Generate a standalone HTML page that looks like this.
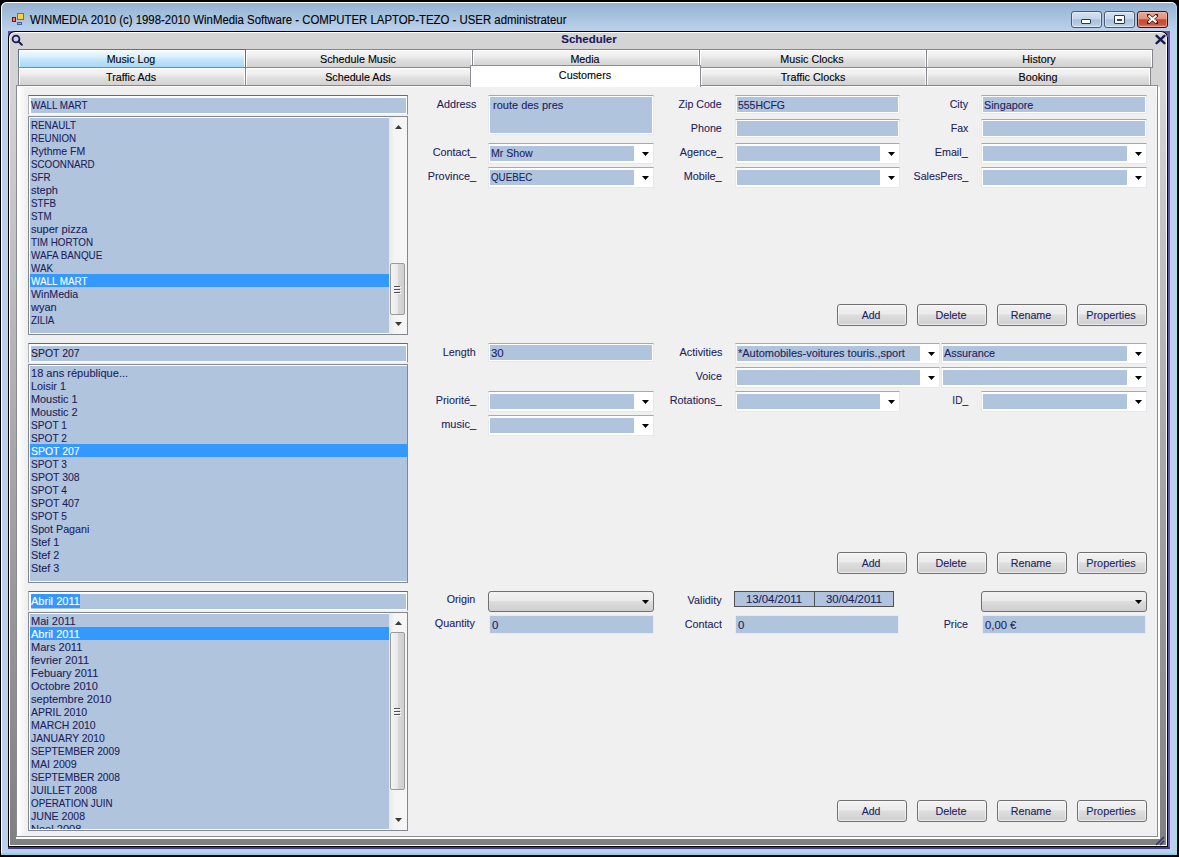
<!DOCTYPE html>
<html><head><meta charset="utf-8"><style>
html,body{margin:0;padding:0;width:1179px;height:857px;overflow:hidden;background:#000}
body>div,body>svg{position:absolute}
.t{position:absolute;font-family:"Liberation Sans",sans-serif;font-size:11px;line-height:13px;white-space:nowrap;-webkit-text-stroke:0.1px currentColor}
</style></head><body>
<div style="left:0;top:0;width:1179px;height:857px;background:#000"></div>
<div style="left:1px;top:2px;width:1176px;height:853px;background:#b9d1ea;border-radius:6px 6px 0 0"></div>
<div style="left:1px;top:2px;width:1176px;height:853px;border:1px solid #fff;border-right-color:#a8d8ec;border-bottom:none;box-sizing:border-box;border-radius:6px 6px 0 0"></div>
<div style="left:2px;top:3px;width:1174px;height:28px;background:linear-gradient(#94b2d0,#a3bfdc 40%,#b4cbe6 80%,#bdd1ec);border-radius:5px 5px 0 0"></div>
<div style="left:1px;top:853px;width:1176px;height:2px;background:#8fd0f0"></div>
<div style="left:12px;top:17px;width:4px;height:5px;background:#e88070;border:1px solid #701810;box-sizing:border-box"></div>
<div style="left:17px;top:13px;width:7px;height:7px;background:#f8d040;border:1px solid #907020;box-sizing:border-box"></div>
<div style="left:17px;top:22px;width:5px;height:3px;background:#90b4f4;border:1px solid #4060a8;box-sizing:border-box"></div>
<div class="t" style="left:30px;top:14px;color:#000;font-size:12px;font-weight:normal;letter-spacing:0px;transform:scaleX(0.949);transform-origin:0 0;">WINMEDIA 2010 (c) 1998-2010 WinMedia Software - COMPUTER LAPTOP-TEZO - USER administrateur</div>
<div style="left:1071px;top:11px;width:31px;height:17px;box-sizing:border-box;border:1px solid #4a5a70;border-radius:3px;background:linear-gradient(#d4e2f2,#c4d6ec 45%,#a8c0dc 52%,#b4cce6 85%,#c8dcf0);box-shadow:inset 0 0 0 1px rgba(255,255,255,.4)"></div>
<div style="left:1081px;top:19px;width:10px;height:5px;box-sizing:border-box;border:1px solid #283848;background:#fff;border-radius:1px"></div>
<div style="left:1104px;top:11px;width:31px;height:17px;box-sizing:border-box;border:1px solid #4a5a70;border-radius:3px;background:linear-gradient(#d4e2f2,#c4d6ec 45%,#a8c0dc 52%,#b4cce6 85%,#c8dcf0);box-shadow:inset 0 0 0 1px rgba(255,255,255,.4)"></div>
<div style="left:1114px;top:15px;width:11px;height:9px;box-sizing:border-box;border:1.5px solid #283848;background:#fff;border-radius:1px"></div>
<div style="left:1117px;top:19px;width:5px;height:2px;background:#384858"></div>
<div style="left:1137px;top:11px;width:31px;height:17px;box-sizing:border-box;border:1px solid #3a1410;border-radius:3px;background:linear-gradient(#eca898,#e0907c 45%,#c8482e 52%,#c85a40 85%,#e09080);box-shadow:inset 0 0 0 1px rgba(255,200,190,.5)"></div>
<svg style="position:absolute;left:1147px;top:14px" width="11" height="10" viewBox="0 0 11 10"><path d="M1.5 1.5 L9.5 8.5 M9.5 1.5 L1.5 8.5" stroke="#3a1510" stroke-width="3.6" stroke-linecap="round"/><path d="M1.5 1.5 L9.5 8.5 M9.5 1.5 L1.5 8.5" stroke="#fff" stroke-width="2.2"/></svg>
<div style="left:8px;top:31px;width:7px;height:7px;background:#5a50a0"></div>
<div style="left:1163px;top:31px;width:7px;height:4px;background:#5a50a0"></div>
<div style="left:1168px;top:33px;width:2px;height:816px;background:#5e56a8"></div>
<div style="left:1170px;top:33px;width:1px;height:816px;background:#c8d0f8"></div>
<div style="left:8px;top:847px;width:1162px;height:2px;background:#45408a"></div>
<div style="left:8px;top:31px;width:1160px;height:816px;background:#000;border-radius:7px 7px 0 0"></div>
<div style="left:9px;top:32px;width:1158px;height:814px;background:#fff;border-radius:6px 6px 0 0"></div>
<div style="left:10px;top:33px;width:1156px;height:812px;background:linear-gradient(#d4d4d4 0px,#d4d4d4 60px,#a8a8a8 420px,#808080 812px);border-radius:5px 5px 0 0"></div>
<div style="left:1158px;top:87px;width:2px;height:752px;background:#fff"></div>
<div style="left:16px;top:837px;width:1144px;height:2px;background:#fff"></div>
<svg style="position:absolute;left:11px;top:34px" width="12" height="12" viewBox="0 0 12 12"><circle cx="5" cy="5" r="3.4" fill="#d0d0f4" stroke="#1a1a50" stroke-width="1.8"/><path d="M7.4 7.4 L10.8 10.8" stroke="#1a1a50" stroke-width="2" stroke-linecap="round"/></svg>
<svg style="position:absolute;left:1155px;top:34px" width="11" height="11" viewBox="0 0 11 11"><path d="M1.6 1.8 L9.4 9.2 M9.4 1.8 L1.6 9.2" stroke="#1a1a50" stroke-width="2.4" stroke-linecap="round"/></svg>
<div class="t" style="left:439px;width:300px;top:33px;color:#1a1a60;font-size:11px;font-weight:bold;letter-spacing:0px;text-align:center;transform:scaleX(1.040);transform-origin:50% 0;">Scheduler</div>
<div style="left:16px;top:85px;width:1142px;height:752px;box-sizing:border-box;border:1px solid #898c95;background:#fff"></div>
<div style="left:17px;top:86px;width:1140px;height:750px;background:linear-gradient(#fcfcfc,#f0f0f0 30px)"></div>
<div style="left:18px;top:87px;width:1138px;height:748px;background:#f0f0f0"></div>
<div style="left:17px;top:86px;width:3px;height:750px;background:#fff"></div>
<div style="left:20px;top:87px;width:6px;height:748px;background:linear-gradient(90deg,#fafafa,#f0f0f0)"></div>
<div style="left:245px;top:49px;width:228px;height:19px;box-sizing:border-box;border:1px solid #84868c;background:linear-gradient(#f6f6f6,#efefef 35%,#dedede 60%,#d2d2d2);box-shadow:inset 1px 1px 0 #fff,inset -1px 0 0 #fff"></div>
<div class="t" style="left:208px;width:300px;top:53px;color:#000;font-size:11px;font-weight:normal;letter-spacing:0px;text-align:center;transform:scaleX(0.979);transform-origin:50% 0;">Schedule Music</div>
<div style="left:472px;top:49px;width:228px;height:19px;box-sizing:border-box;border:1px solid #84868c;background:linear-gradient(#f6f6f6,#efefef 35%,#dedede 60%,#d2d2d2);box-shadow:inset 1px 1px 0 #fff,inset -1px 0 0 #fff"></div>
<div class="t" style="left:435px;width:300px;top:53px;color:#000;font-size:11px;font-weight:normal;letter-spacing:0px;text-align:center;transform:scaleX(0.973);transform-origin:50% 0;">Media</div>
<div style="left:699px;top:49px;width:228px;height:19px;box-sizing:border-box;border:1px solid #84868c;background:linear-gradient(#f6f6f6,#efefef 35%,#dedede 60%,#d2d2d2);box-shadow:inset 1px 1px 0 #fff,inset -1px 0 0 #fff"></div>
<div class="t" style="left:662px;width:300px;top:53px;color:#000;font-size:11px;font-weight:normal;letter-spacing:0px;text-align:center;transform:scaleX(0.976);transform-origin:50% 0;">Music Clocks</div>
<div style="left:926px;top:49px;width:227px;height:19px;box-sizing:border-box;border:1px solid #84868c;background:linear-gradient(#f6f6f6,#efefef 35%,#dedede 60%,#d2d2d2);box-shadow:inset 1px 1px 0 #fff,inset -1px 0 0 #fff"></div>
<div class="t" style="left:889px;width:300px;top:53px;color:#000;font-size:11px;font-weight:normal;letter-spacing:0px;text-align:center;transform:scaleX(0.980);transform-origin:50% 0;">History</div>
<div style="left:18px;top:49px;width:228px;height:19px;box-sizing:border-box;border:1px solid #5a7088;background:linear-gradient(#f2fafe,#dff2fc 35%,#bfe4fa 60%,#a8d8f6);box-shadow:inset 1px 1px 0 #fff,inset -1px 0 0 #fff"></div>
<div class="t" style="left:-19px;width:300px;top:53px;color:#000;font-size:11px;font-weight:normal;letter-spacing:0px;text-align:center;transform:scaleX(0.968);transform-origin:50% 0;">Music Log</div>
<div style="left:18px;top:67px;width:228px;height:19px;box-sizing:border-box;border:1px solid #84868c;background:linear-gradient(#f6f6f6,#efefef 35%,#dedede 60%,#d2d2d2);box-shadow:inset 1px 1px 0 #fff,inset -1px 0 0 #fff"></div>
<div class="t" style="left:-19px;width:300px;top:71px;color:#000;font-size:11px;font-weight:normal;letter-spacing:0px;text-align:center;transform:scaleX(0.974);transform-origin:50% 0;">Traffic Ads</div>
<div style="left:245px;top:67px;width:227px;height:19px;box-sizing:border-box;border:1px solid #84868c;background:linear-gradient(#f6f6f6,#efefef 35%,#dedede 60%,#d2d2d2);box-shadow:inset 1px 1px 0 #fff,inset -1px 0 0 #fff"></div>
<div class="t" style="left:208px;width:300px;top:71px;color:#000;font-size:11px;font-weight:normal;letter-spacing:0px;text-align:center;transform:scaleX(0.976);transform-origin:50% 0;">Schedule Ads</div>
<div style="left:700px;top:67px;width:227px;height:19px;box-sizing:border-box;border:1px solid #84868c;background:linear-gradient(#f6f6f6,#efefef 35%,#dedede 60%,#d2d2d2);box-shadow:inset 1px 1px 0 #fff,inset -1px 0 0 #fff"></div>
<div class="t" style="left:663px;width:300px;top:71px;color:#000;font-size:11px;font-weight:normal;letter-spacing:0px;text-align:center;transform:scaleX(0.979);transform-origin:50% 0;">Traffic Clocks</div>
<div style="left:926px;top:67px;width:225px;height:19px;box-sizing:border-box;border:1px solid #84868c;background:linear-gradient(#f6f6f6,#efefef 35%,#dedede 60%,#d2d2d2);box-shadow:inset 1px 1px 0 #fff,inset -1px 0 0 #fff"></div>
<div class="t" style="left:888px;width:300px;top:71px;color:#000;font-size:11px;font-weight:normal;letter-spacing:0px;text-align:center;transform:scaleX(0.980);transform-origin:50% 0;">Booking</div>
<div style="left:470px;top:65px;width:231px;height:22px;box-sizing:border-box;border:1px solid #898c95;border-bottom:none;background:#fff"></div>
<div class="t" style="left:435px;width:300px;top:69px;color:#000;font-size:11px;font-weight:normal;letter-spacing:0px;text-align:center;transform:scaleX(0.984);transform-origin:50% 0;">Customers</div>
<div style="left:28px;top:95px;width:380px;height:20px;box-sizing:border-box;border:1px solid #a8b0b8;border-top-color:#5c6c84;border-right-color:#8a9098;border-bottom-color:#f0f4f8;background:#fff"></div>
<div style="left:31px;top:98px;width:375px;height:15px;background:#b0c4de"></div>
<div style="left:28px;top:116px;width:380px;height:219px;box-sizing:border-box;border:1px solid #828790;background:#fff"></div>
<div style="left:30px;top:118px;width:360px;height:215px;background:#b0c4de"></div>
<div class="t" style="left:31px;top:118px;width:359px;height:13px;overflow:hidden;color:#1e1e5c"><span style="display:inline-block;margin-top:1px;transform:scaleX(0.890);transform-origin:0 0">RENAULT</span></div>
<div class="t" style="left:31px;top:131px;width:359px;height:13px;overflow:hidden;color:#1e1e5c"><span style="display:inline-block;margin-top:1px;transform:scaleX(0.890);transform-origin:0 0">REUNION</span></div>
<div class="t" style="left:31px;top:144px;width:359px;height:13px;overflow:hidden;color:#1e1e5c"><span style="display:inline-block;margin-top:1px;transform:scaleX(0.954);transform-origin:0 0">Rythme FM</span></div>
<div class="t" style="left:31px;top:157px;width:359px;height:13px;overflow:hidden;color:#1e1e5c"><span style="display:inline-block;margin-top:1px;transform:scaleX(0.890);transform-origin:0 0">SCOONNARD</span></div>
<div class="t" style="left:31px;top:170px;width:359px;height:13px;overflow:hidden;color:#1e1e5c"><span style="display:inline-block;margin-top:1px;transform:scaleX(0.890);transform-origin:0 0">SFR</span></div>
<div class="t" style="left:31px;top:183px;width:359px;height:13px;overflow:hidden;color:#1e1e5c"><span style="display:inline-block;margin-top:1px;transform:scaleX(1.000);transform-origin:0 0">steph</span></div>
<div class="t" style="left:31px;top:196px;width:359px;height:13px;overflow:hidden;color:#1e1e5c"><span style="display:inline-block;margin-top:1px;transform:scaleX(0.890);transform-origin:0 0">STFB</span></div>
<div class="t" style="left:31px;top:209px;width:359px;height:13px;overflow:hidden;color:#1e1e5c"><span style="display:inline-block;margin-top:1px;transform:scaleX(0.890);transform-origin:0 0">STM</span></div>
<div class="t" style="left:31px;top:222px;width:359px;height:13px;overflow:hidden;color:#1e1e5c"><span style="display:inline-block;margin-top:1px;transform:scaleX(1.000);transform-origin:0 0">super pizza</span></div>
<div class="t" style="left:31px;top:235px;width:359px;height:13px;overflow:hidden;color:#1e1e5c"><span style="display:inline-block;margin-top:1px;transform:scaleX(0.895);transform-origin:0 0">TIM HORTON</span></div>
<div class="t" style="left:31px;top:248px;width:359px;height:13px;overflow:hidden;color:#1e1e5c"><span style="display:inline-block;margin-top:1px;transform:scaleX(0.894);transform-origin:0 0">WAFA BANQUE</span></div>
<div class="t" style="left:31px;top:261px;width:359px;height:13px;overflow:hidden;color:#1e1e5c"><span style="display:inline-block;margin-top:1px;transform:scaleX(0.890);transform-origin:0 0">WAK</span></div>
<div style="left:30px;top:274px;width:360px;height:13px;background:#3399ff"></div>
<div class="t" style="left:31px;top:274px;width:359px;height:13px;overflow:hidden;color:#fff"><span style="display:inline-block;margin-top:1px;transform:scaleX(0.895);transform-origin:0 0">WALL MART</span></div>
<div class="t" style="left:31px;top:287px;width:359px;height:13px;overflow:hidden;color:#1e1e5c"><span style="display:inline-block;margin-top:1px;transform:scaleX(0.966);transform-origin:0 0">WinMedia</span></div>
<div class="t" style="left:31px;top:300px;width:359px;height:13px;overflow:hidden;color:#1e1e5c"><span style="display:inline-block;margin-top:1px;transform:scaleX(1.000);transform-origin:0 0">wyan</span></div>
<div class="t" style="left:31px;top:313px;width:359px;height:13px;overflow:hidden;color:#1e1e5c"><span style="display:inline-block;margin-top:1px;transform:scaleX(0.890);transform-origin:0 0">ZILIA</span></div>
<div style="left:389px;top:117px;width:18px;height:217px;background:linear-gradient(90deg,#e8e8e8,#f4f4f4 30%,#f6f6f6)"></div>
<svg style="position:absolute;left:395px;top:125px" width="7" height="4"><path d="M0 4 L3.5 0 L7 4 Z" fill="#3a3a3a"/></svg>
<svg style="position:absolute;left:395px;top:322px" width="7" height="4"><path d="M0 0 L7 0 L3.5 4 Z" fill="#3a3a3a"/></svg>
<div style="left:390px;top:263px;width:15px;height:52px;box-sizing:border-box;border:1px solid #9a9a9a;border-radius:2px;background:linear-gradient(90deg,#f4f4f4,#e8e8e8 50%,#d8d8d8 51%,#d0d0d0)"></div>
<div style="left:394px;top:286px;width:6px;height:1px;background:#505050"></div>
<div style="left:395px;top:287px;width:6px;height:1px;background:#fafafa"></div>
<div style="left:394px;top:289px;width:6px;height:1px;background:#505050"></div>
<div style="left:395px;top:290px;width:6px;height:1px;background:#fafafa"></div>
<div style="left:394px;top:292px;width:6px;height:1px;background:#505050"></div>
<div style="left:395px;top:293px;width:6px;height:1px;background:#fafafa"></div>
<div class="t" style="left:31px;top:99px;color:#1e1e5c;font-size:11px;font-weight:normal;letter-spacing:0px;transform:scaleX(0.895);transform-origin:0 0;">WALL MART</div>
<div style="left:28px;top:343px;width:380px;height:20px;box-sizing:border-box;border:1px solid #a8b0b8;border-top-color:#5c6c84;border-right-color:#8a9098;border-bottom-color:#f0f4f8;background:#fff"></div>
<div style="left:31px;top:346px;width:375px;height:15px;background:#b0c4de"></div>
<div style="left:28px;top:364px;width:380px;height:219px;box-sizing:border-box;border:1px solid #828790;background:#fff"></div>
<div style="left:30px;top:366px;width:377px;height:215px;background:#b0c4de"></div>
<div class="t" style="left:31px;top:366px;width:376px;height:13px;overflow:hidden;color:#1e1e5c"><span style="display:inline-block;margin-top:1px;transform:scaleX(1.005);transform-origin:0 0">18 ans république...</span></div>
<div class="t" style="left:31px;top:379px;width:376px;height:13px;overflow:hidden;color:#1e1e5c"><span style="display:inline-block;margin-top:1px;transform:scaleX(0.987);transform-origin:0 0">Loisir 1</span></div>
<div class="t" style="left:31px;top:392px;width:376px;height:13px;overflow:hidden;color:#1e1e5c"><span style="display:inline-block;margin-top:1px;transform:scaleX(0.989);transform-origin:0 0">Moustic 1</span></div>
<div class="t" style="left:31px;top:405px;width:376px;height:13px;overflow:hidden;color:#1e1e5c"><span style="display:inline-block;margin-top:1px;transform:scaleX(0.989);transform-origin:0 0">Moustic 2</span></div>
<div class="t" style="left:31px;top:418px;width:376px;height:13px;overflow:hidden;color:#1e1e5c"><span style="display:inline-block;margin-top:1px;transform:scaleX(0.923);transform-origin:0 0">SPOT 1</span></div>
<div class="t" style="left:31px;top:431px;width:376px;height:13px;overflow:hidden;color:#1e1e5c"><span style="display:inline-block;margin-top:1px;transform:scaleX(0.923);transform-origin:0 0">SPOT 2</span></div>
<div style="left:30px;top:444px;width:377px;height:13px;background:#3399ff"></div>
<div class="t" style="left:31px;top:444px;width:376px;height:13px;overflow:hidden;color:#fff"><span style="display:inline-block;margin-top:1px;transform:scaleX(0.951);transform-origin:0 0">SPOT 207</span></div>
<div class="t" style="left:31px;top:457px;width:376px;height:13px;overflow:hidden;color:#1e1e5c"><span style="display:inline-block;margin-top:1px;transform:scaleX(0.923);transform-origin:0 0">SPOT 3</span></div>
<div class="t" style="left:31px;top:470px;width:376px;height:13px;overflow:hidden;color:#1e1e5c"><span style="display:inline-block;margin-top:1px;transform:scaleX(0.951);transform-origin:0 0">SPOT 308</span></div>
<div class="t" style="left:31px;top:483px;width:376px;height:13px;overflow:hidden;color:#1e1e5c"><span style="display:inline-block;margin-top:1px;transform:scaleX(0.923);transform-origin:0 0">SPOT 4</span></div>
<div class="t" style="left:31px;top:496px;width:376px;height:13px;overflow:hidden;color:#1e1e5c"><span style="display:inline-block;margin-top:1px;transform:scaleX(0.951);transform-origin:0 0">SPOT 407</span></div>
<div class="t" style="left:31px;top:509px;width:376px;height:13px;overflow:hidden;color:#1e1e5c"><span style="display:inline-block;margin-top:1px;transform:scaleX(0.923);transform-origin:0 0">SPOT 5</span></div>
<div class="t" style="left:31px;top:522px;width:376px;height:13px;overflow:hidden;color:#1e1e5c"><span style="display:inline-block;margin-top:1px;transform:scaleX(0.974);transform-origin:0 0">Spot Pagani</span></div>
<div class="t" style="left:31px;top:535px;width:376px;height:13px;overflow:hidden;color:#1e1e5c"><span style="display:inline-block;margin-top:1px;transform:scaleX(0.983);transform-origin:0 0">Stef 1</span></div>
<div class="t" style="left:31px;top:548px;width:376px;height:13px;overflow:hidden;color:#1e1e5c"><span style="display:inline-block;margin-top:1px;transform:scaleX(0.983);transform-origin:0 0">Stef 2</span></div>
<div class="t" style="left:31px;top:561px;width:376px;height:13px;overflow:hidden;color:#1e1e5c"><span style="display:inline-block;margin-top:1px;transform:scaleX(0.983);transform-origin:0 0">Stef 3</span></div>
<div class="t" style="left:31px;top:347px;color:#202048;font-size:11px;font-weight:normal;letter-spacing:0px;transform:scaleX(0.951);transform-origin:0 0;">SPOT 207</div>
<div style="left:28px;top:591px;width:380px;height:20px;box-sizing:border-box;border:1px solid #a8b0b8;border-top-color:#5c6c84;border-right-color:#8a9098;border-bottom-color:#f0f4f8;background:#fff"></div>
<div style="left:31px;top:594px;width:375px;height:15px;background:#b0c4de"></div>
<div style="left:28px;top:612px;width:380px;height:219px;box-sizing:border-box;border:1px solid #828790;background:#fff"></div>
<div style="left:30px;top:614px;width:360px;height:215px;background:#b0c4de"></div>
<div class="t" style="left:31px;top:614px;width:359px;height:13px;overflow:hidden;color:#1e1e5c"><span style="display:inline-block;margin-top:1px;transform:scaleX(1.004);transform-origin:0 0">Mai 2011</span></div>
<div style="left:30px;top:627px;width:360px;height:13px;background:#3399ff"></div>
<div class="t" style="left:31px;top:627px;width:359px;height:13px;overflow:hidden;color:#fff"><span style="display:inline-block;margin-top:1px;transform:scaleX(1.003);transform-origin:0 0">Abril 2011</span></div>
<div class="t" style="left:31px;top:640px;width:359px;height:13px;overflow:hidden;color:#1e1e5c"><span style="display:inline-block;margin-top:1px;transform:scaleX(1.003);transform-origin:0 0">Mars 2011</span></div>
<div class="t" style="left:31px;top:653px;width:359px;height:13px;overflow:hidden;color:#1e1e5c"><span style="display:inline-block;margin-top:1px;transform:scaleX(1.015);transform-origin:0 0">fevrier 2011</span></div>
<div class="t" style="left:31px;top:666px;width:359px;height:13px;overflow:hidden;color:#1e1e5c"><span style="display:inline-block;margin-top:1px;transform:scaleX(1.003);transform-origin:0 0">Febuary 2011</span></div>
<div class="t" style="left:31px;top:679px;width:359px;height:13px;overflow:hidden;color:#1e1e5c"><span style="display:inline-block;margin-top:1px;transform:scaleX(1.003);transform-origin:0 0">Octobre 2010</span></div>
<div class="t" style="left:31px;top:692px;width:359px;height:13px;overflow:hidden;color:#1e1e5c"><span style="display:inline-block;margin-top:1px;transform:scaleX(1.013);transform-origin:0 0">septembre 2010</span></div>
<div class="t" style="left:31px;top:705px;width:359px;height:13px;overflow:hidden;color:#1e1e5c"><span style="display:inline-block;margin-top:1px;transform:scaleX(0.952);transform-origin:0 0">APRIL 2010</span></div>
<div class="t" style="left:31px;top:718px;width:359px;height:13px;overflow:hidden;color:#1e1e5c"><span style="display:inline-block;margin-top:1px;transform:scaleX(0.952);transform-origin:0 0">MARCH 2010</span></div>
<div class="t" style="left:31px;top:731px;width:359px;height:13px;overflow:hidden;color:#1e1e5c"><span style="display:inline-block;margin-top:1px;transform:scaleX(0.941);transform-origin:0 0">JANUARY 2010</span></div>
<div class="t" style="left:31px;top:744px;width:359px;height:13px;overflow:hidden;color:#1e1e5c"><span style="display:inline-block;margin-top:1px;transform:scaleX(0.933);transform-origin:0 0">SEPTEMBER 2009</span></div>
<div class="t" style="left:31px;top:757px;width:359px;height:13px;overflow:hidden;color:#1e1e5c"><span style="display:inline-block;margin-top:1px;transform:scaleX(0.971);transform-origin:0 0">MAI 2009</span></div>
<div class="t" style="left:31px;top:770px;width:359px;height:13px;overflow:hidden;color:#1e1e5c"><span style="display:inline-block;margin-top:1px;transform:scaleX(0.933);transform-origin:0 0">SEPTEMBER 2008</span></div>
<div class="t" style="left:31px;top:783px;width:359px;height:13px;overflow:hidden;color:#1e1e5c"><span style="display:inline-block;margin-top:1px;transform:scaleX(0.941);transform-origin:0 0">JUILLET 2008</span></div>
<div class="t" style="left:31px;top:796px;width:359px;height:13px;overflow:hidden;color:#1e1e5c"><span style="display:inline-block;margin-top:1px;transform:scaleX(0.893);transform-origin:0 0">OPERATION JUIN</span></div>
<div class="t" style="left:31px;top:809px;width:359px;height:13px;overflow:hidden;color:#1e1e5c"><span style="display:inline-block;margin-top:1px;transform:scaleX(0.960);transform-origin:0 0">JUNE 2008</span></div>
<div class="t" style="left:31px;top:822px;width:359px;height:7px;overflow:hidden;color:#1e1e5c"><span style="display:inline-block;margin-top:1px;transform:scaleX(1.003);transform-origin:0 0">Noel 2008</span></div>
<div style="left:389px;top:613px;width:18px;height:217px;background:linear-gradient(90deg,#e8e8e8,#f4f4f4 30%,#f6f6f6)"></div>
<svg style="position:absolute;left:395px;top:621px" width="7" height="4"><path d="M0 4 L3.5 0 L7 4 Z" fill="#3a3a3a"/></svg>
<svg style="position:absolute;left:395px;top:818px" width="7" height="4"><path d="M0 0 L7 0 L3.5 4 Z" fill="#3a3a3a"/></svg>
<div style="left:390px;top:632px;width:15px;height:158px;box-sizing:border-box;border:1px solid #9a9a9a;border-radius:2px;background:linear-gradient(90deg,#f4f4f4,#e8e8e8 50%,#d8d8d8 51%,#d0d0d0)"></div>
<div style="left:394px;top:708px;width:6px;height:1px;background:#505050"></div>
<div style="left:395px;top:709px;width:6px;height:1px;background:#fafafa"></div>
<div style="left:394px;top:711px;width:6px;height:1px;background:#505050"></div>
<div style="left:395px;top:712px;width:6px;height:1px;background:#fafafa"></div>
<div style="left:394px;top:714px;width:6px;height:1px;background:#505050"></div>
<div style="left:395px;top:715px;width:6px;height:1px;background:#fafafa"></div>
<div style="left:31px;top:594px;width:49px;height:14px;background:#3399ff"></div>
<div class="t" style="left:31px;top:595px;color:#fff;font-size:11px;font-weight:normal;letter-spacing:0px;transform:scaleX(1.003);transform-origin:0 0;">Abril 2011</div>
<div class="t" style="right:703px;top:98px;color:#1e1e5c;font-size:11px;font-weight:normal;letter-spacing:0px;text-align:right;transform:scaleX(0.980);transform-origin:100% 0;">Address</div>
<div style="left:488px;top:95px;width:166px;height:40px;box-sizing:border-box;border:1px solid #e3e9ef;border-top-color:#a8a8a8;background:#fff"></div>
<div style="left:490px;top:97px;width:162px;height:36px;background:#b0c4de"></div>
<div class="t" style="left:493px;top:99px;color:#1e1e5c;font-size:11px;font-weight:normal;letter-spacing:0px;transform:scaleX(1.000);transform-origin:0 0;">route des pres</div>
<div class="t" style="right:703px;top:146px;color:#1e1e5c;font-size:11px;font-weight:normal;letter-spacing:0px;text-align:right;transform:scaleX(0.982);transform-origin:100% 0;">Contact_</div>
<div style="left:488px;top:143px;width:166px;height:21px;box-sizing:border-box;border:1px solid #e3e9ef;border-top-color:#a8a8a8;background:#fff"></div>
<div style="left:490px;top:146px;width:144px;height:15px;background:#b0c4de"></div>
<svg style="position:absolute;left:642px;top:152px" width="7" height="5"><path d="M0 0 L7 0 L3.5 4 Z" fill="#000"/></svg>
<div class="t" style="left:491px;top:147px;color:#1e1e5c;font-size:11px;font-weight:normal;letter-spacing:0px;transform:scaleX(0.959);transform-origin:0 0;">Mr Show</div>
<div class="t" style="right:703px;top:170px;color:#1e1e5c;font-size:11px;font-weight:normal;letter-spacing:0px;text-align:right;transform:scaleX(0.984);transform-origin:100% 0;">Province_</div>
<div style="left:488px;top:167px;width:166px;height:21px;box-sizing:border-box;border:1px solid #e3e9ef;border-top-color:#a8a8a8;background:#fff"></div>
<div style="left:490px;top:170px;width:144px;height:15px;background:#b0c4de"></div>
<svg style="position:absolute;left:642px;top:176px" width="7" height="5"><path d="M0 0 L7 0 L3.5 4 Z" fill="#000"/></svg>
<div class="t" style="left:491px;top:171px;color:#1e1e5c;font-size:11px;font-weight:normal;letter-spacing:0px;transform:scaleX(0.890);transform-origin:0 0;">QUEBEC</div>
<div class="t" style="right:457px;top:98px;color:#1e1e5c;font-size:11px;font-weight:normal;letter-spacing:0px;text-align:right;transform:scaleX(0.964);transform-origin:100% 0;">Zip Code</div>
<div style="left:735px;top:95px;width:165px;height:19px;box-sizing:border-box;border:1px solid #e3e9ef;border-top-color:#a8a8a8;background:#fff"></div>
<div style="left:737px;top:97px;width:161px;height:15px;background:#b0c4de"></div>
<div class="t" style="left:738px;top:99px;color:#1e1e5c;font-size:11px;font-weight:normal;letter-spacing:0px;transform:scaleX(0.948);transform-origin:0 0;">555HCFG</div>
<div class="t" style="right:457px;top:122px;color:#1e1e5c;font-size:11px;font-weight:normal;letter-spacing:0px;text-align:right;transform:scaleX(0.973);transform-origin:100% 0;">Phone</div>
<div style="left:735px;top:119px;width:165px;height:19px;box-sizing:border-box;border:1px solid #e3e9ef;border-top-color:#a8a8a8;background:#fff"></div>
<div style="left:737px;top:121px;width:161px;height:15px;background:#b0c4de"></div>
<div class="t" style="right:457px;top:146px;color:#1e1e5c;font-size:11px;font-weight:normal;letter-spacing:0px;text-align:right;transform:scaleX(0.980);transform-origin:100% 0;">Agence_</div>
<div style="left:735px;top:143px;width:165px;height:21px;box-sizing:border-box;border:1px solid #e3e9ef;border-top-color:#a8a8a8;background:#fff"></div>
<div style="left:737px;top:146px;width:143px;height:15px;background:#b0c4de"></div>
<svg style="position:absolute;left:888px;top:152px" width="7" height="5"><path d="M0 0 L7 0 L3.5 4 Z" fill="#000"/></svg>
<div class="t" style="right:457px;top:170px;color:#1e1e5c;font-size:11px;font-weight:normal;letter-spacing:0px;text-align:right;transform:scaleX(0.980);transform-origin:100% 0;">Mobile_</div>
<div style="left:735px;top:167px;width:165px;height:21px;box-sizing:border-box;border:1px solid #e3e9ef;border-top-color:#a8a8a8;background:#fff"></div>
<div style="left:737px;top:170px;width:143px;height:15px;background:#b0c4de"></div>
<svg style="position:absolute;left:888px;top:176px" width="7" height="5"><path d="M0 0 L7 0 L3.5 4 Z" fill="#000"/></svg>
<div class="t" style="right:211px;top:98px;color:#1e1e5c;font-size:11px;font-weight:normal;letter-spacing:0px;text-align:right;transform:scaleX(0.966);transform-origin:100% 0;">City</div>
<div style="left:981px;top:95px;width:166px;height:19px;box-sizing:border-box;border:1px solid #e3e9ef;border-top-color:#a8a8a8;background:#fff"></div>
<div style="left:983px;top:97px;width:162px;height:15px;background:#b0c4de"></div>
<div class="t" style="left:984px;top:99px;color:#1e1e5c;font-size:11px;font-weight:normal;letter-spacing:0px;transform:scaleX(0.984);transform-origin:0 0;">Singapore</div>
<div class="t" style="right:211px;top:122px;color:#1e1e5c;font-size:11px;font-weight:normal;letter-spacing:0px;text-align:right;transform:scaleX(0.956);transform-origin:100% 0;">Fax</div>
<div style="left:981px;top:119px;width:166px;height:19px;box-sizing:border-box;border:1px solid #e3e9ef;border-top-color:#a8a8a8;background:#fff"></div>
<div style="left:983px;top:121px;width:162px;height:15px;background:#b0c4de"></div>
<div class="t" style="right:211px;top:146px;color:#1e1e5c;font-size:11px;font-weight:normal;letter-spacing:0px;text-align:right;transform:scaleX(0.977);transform-origin:100% 0;">Email_</div>
<div style="left:981px;top:143px;width:166px;height:21px;box-sizing:border-box;border:1px solid #e3e9ef;border-top-color:#a8a8a8;background:#fff"></div>
<div style="left:983px;top:146px;width:144px;height:15px;background:#b0c4de"></div>
<svg style="position:absolute;left:1135px;top:152px" width="7" height="5"><path d="M0 0 L7 0 L3.5 4 Z" fill="#000"/></svg>
<div class="t" style="right:211px;top:170px;color:#1e1e5c;font-size:11px;font-weight:normal;letter-spacing:0px;text-align:right;transform:scaleX(0.973);transform-origin:100% 0;">SalesPers_</div>
<div style="left:981px;top:167px;width:166px;height:21px;box-sizing:border-box;border:1px solid #e3e9ef;border-top-color:#a8a8a8;background:#fff"></div>
<div style="left:983px;top:170px;width:144px;height:15px;background:#b0c4de"></div>
<svg style="position:absolute;left:1135px;top:176px" width="7" height="5"><path d="M0 0 L7 0 L3.5 4 Z" fill="#000"/></svg>
<div style="left:837px;top:304px;width:70px;height:22px;box-sizing:border-box;border:1px solid #707070;border-radius:3px;background:linear-gradient(#f2f2f2,#ebebeb 45%,#dddddd 50%,#cfcfcf);box-shadow:inset 0 0 0 1px rgba(255,255,255,.6)"></div>
<div class="t" style="left:721px;width:300px;top:309px;color:#1e1e5c;font-size:11px;font-weight:normal;letter-spacing:0px;text-align:center;transform:scaleX(0.956);transform-origin:50% 0;">Add</div>
<div style="left:917px;top:304px;width:70px;height:22px;box-sizing:border-box;border:1px solid #707070;border-radius:3px;background:linear-gradient(#f2f2f2,#ebebeb 45%,#dddddd 50%,#cfcfcf);box-shadow:inset 0 0 0 1px rgba(255,255,255,.6)"></div>
<div class="t" style="left:801px;width:300px;top:309px;color:#1e1e5c;font-size:11px;font-weight:normal;letter-spacing:0px;text-align:center;transform:scaleX(0.977);transform-origin:50% 0;">Delete</div>
<div style="left:997px;top:304px;width:70px;height:22px;box-sizing:border-box;border:1px solid #707070;border-radius:3px;background:linear-gradient(#f2f2f2,#ebebeb 45%,#dddddd 50%,#cfcfcf);box-shadow:inset 0 0 0 1px rgba(255,255,255,.6)"></div>
<div class="t" style="left:881px;width:300px;top:309px;color:#1e1e5c;font-size:11px;font-weight:normal;letter-spacing:0px;text-align:center;transform:scaleX(0.977);transform-origin:50% 0;">Rename</div>
<div style="left:1077px;top:304px;width:70px;height:22px;box-sizing:border-box;border:1px solid #707070;border-radius:3px;background:linear-gradient(#f2f2f2,#ebebeb 45%,#dddddd 50%,#cfcfcf);box-shadow:inset 0 0 0 1px rgba(255,255,255,.6)"></div>
<div class="t" style="left:961px;width:300px;top:309px;color:#1e1e5c;font-size:11px;font-weight:normal;letter-spacing:0px;text-align:center;transform:scaleX(0.986);transform-origin:50% 0;">Properties</div>
<div class="t" style="right:703px;top:346px;color:#1e1e5c;font-size:11px;font-weight:normal;letter-spacing:0px;text-align:right;transform:scaleX(0.977);transform-origin:100% 0;">Length</div>
<div style="left:488px;top:343px;width:166px;height:19px;box-sizing:border-box;border:1px solid #e3e9ef;border-top-color:#a8a8a8;background:#fff"></div>
<div style="left:490px;top:345px;width:162px;height:15px;background:#b0c4de"></div>
<div class="t" style="left:491px;top:347px;color:#1e1e5c;font-size:11px;font-weight:normal;letter-spacing:0px;transform:scaleX(1.040);transform-origin:0 0;">30</div>
<div class="t" style="right:703px;top:394px;color:#1e1e5c;font-size:11px;font-weight:normal;letter-spacing:0px;text-align:right;transform:scaleX(0.984);transform-origin:100% 0;">Priorité_</div>
<div style="left:488px;top:391px;width:166px;height:21px;box-sizing:border-box;border:1px solid #e3e9ef;border-top-color:#a8a8a8;background:#fff"></div>
<div style="left:490px;top:394px;width:144px;height:15px;background:#b0c4de"></div>
<svg style="position:absolute;left:642px;top:400px" width="7" height="5"><path d="M0 0 L7 0 L3.5 4 Z" fill="#000"/></svg>
<div class="t" style="right:703px;top:418px;color:#1e1e5c;font-size:11px;font-weight:normal;letter-spacing:0px;text-align:right;transform:scaleX(1.000);transform-origin:100% 0;">music_</div>
<div style="left:488px;top:415px;width:166px;height:21px;box-sizing:border-box;border:1px solid #e3e9ef;border-top-color:#a8a8a8;background:#fff"></div>
<div style="left:490px;top:418px;width:144px;height:15px;background:#b0c4de"></div>
<svg style="position:absolute;left:642px;top:424px" width="7" height="5"><path d="M0 0 L7 0 L3.5 4 Z" fill="#000"/></svg>
<div class="t" style="right:457px;top:346px;color:#1e1e5c;font-size:11px;font-weight:normal;letter-spacing:0px;text-align:right;transform:scaleX(0.986);transform-origin:100% 0;">Activities</div>
<div style="left:735px;top:343px;width:205px;height:21px;box-sizing:border-box;border:1px solid #e3e9ef;border-top-color:#a8a8a8;background:#fff"></div>
<div style="left:737px;top:346px;width:183px;height:15px;background:#b0c4de"></div>
<svg style="position:absolute;left:928px;top:352px" width="7" height="5"><path d="M0 0 L7 0 L3.5 4 Z" fill="#000"/></svg>
<div class="t" style="left:738px;top:347px;color:#1e1e5c;font-size:11px;font-weight:normal;letter-spacing:0px;transform:scaleX(0.996);transform-origin:0 0;">*Automobiles-voitures touris.,sport</div>
<div style="left:941px;top:343px;width:206px;height:21px;box-sizing:border-box;border:1px solid #e3e9ef;border-top-color:#a8a8a8;background:#fff"></div>
<div style="left:943px;top:346px;width:184px;height:15px;background:#b0c4de"></div>
<svg style="position:absolute;left:1135px;top:352px" width="7" height="5"><path d="M0 0 L7 0 L3.5 4 Z" fill="#000"/></svg>
<div class="t" style="left:944px;top:347px;color:#1e1e5c;font-size:11px;font-weight:normal;letter-spacing:0px;transform:scaleX(0.984);transform-origin:0 0;">Assurance</div>
<div class="t" style="right:457px;top:370px;color:#1e1e5c;font-size:11px;font-weight:normal;letter-spacing:0px;text-align:right;transform:scaleX(0.973);transform-origin:100% 0;">Voice</div>
<div style="left:735px;top:367px;width:205px;height:21px;box-sizing:border-box;border:1px solid #e3e9ef;border-top-color:#a8a8a8;background:#fff"></div>
<div style="left:737px;top:370px;width:183px;height:15px;background:#b0c4de"></div>
<svg style="position:absolute;left:928px;top:376px" width="7" height="5"><path d="M0 0 L7 0 L3.5 4 Z" fill="#000"/></svg>
<div style="left:941px;top:367px;width:206px;height:21px;box-sizing:border-box;border:1px solid #e3e9ef;border-top-color:#a8a8a8;background:#fff"></div>
<div style="left:943px;top:370px;width:184px;height:15px;background:#b0c4de"></div>
<svg style="position:absolute;left:1135px;top:376px" width="7" height="5"><path d="M0 0 L7 0 L3.5 4 Z" fill="#000"/></svg>
<div class="t" style="right:457px;top:394px;color:#1e1e5c;font-size:11px;font-weight:normal;letter-spacing:0px;text-align:right;transform:scaleX(0.986);transform-origin:100% 0;">Rotations_</div>
<div style="left:735px;top:391px;width:165px;height:21px;box-sizing:border-box;border:1px solid #e3e9ef;border-top-color:#a8a8a8;background:#fff"></div>
<div style="left:737px;top:394px;width:143px;height:15px;background:#b0c4de"></div>
<svg style="position:absolute;left:888px;top:400px" width="7" height="5"><path d="M0 0 L7 0 L3.5 4 Z" fill="#000"/></svg>
<div class="t" style="right:211px;top:394px;color:#1e1e5c;font-size:11px;font-weight:normal;letter-spacing:0px;text-align:right;transform:scaleX(0.920);transform-origin:100% 0;">ID_</div>
<div style="left:981px;top:391px;width:166px;height:21px;box-sizing:border-box;border:1px solid #e3e9ef;border-top-color:#a8a8a8;background:#fff"></div>
<div style="left:983px;top:394px;width:144px;height:15px;background:#b0c4de"></div>
<svg style="position:absolute;left:1135px;top:400px" width="7" height="5"><path d="M0 0 L7 0 L3.5 4 Z" fill="#000"/></svg>
<div style="left:837px;top:552px;width:70px;height:22px;box-sizing:border-box;border:1px solid #707070;border-radius:3px;background:linear-gradient(#f2f2f2,#ebebeb 45%,#dddddd 50%,#cfcfcf);box-shadow:inset 0 0 0 1px rgba(255,255,255,.6)"></div>
<div class="t" style="left:721px;width:300px;top:557px;color:#1e1e5c;font-size:11px;font-weight:normal;letter-spacing:0px;text-align:center;transform:scaleX(0.956);transform-origin:50% 0;">Add</div>
<div style="left:917px;top:552px;width:70px;height:22px;box-sizing:border-box;border:1px solid #707070;border-radius:3px;background:linear-gradient(#f2f2f2,#ebebeb 45%,#dddddd 50%,#cfcfcf);box-shadow:inset 0 0 0 1px rgba(255,255,255,.6)"></div>
<div class="t" style="left:801px;width:300px;top:557px;color:#1e1e5c;font-size:11px;font-weight:normal;letter-spacing:0px;text-align:center;transform:scaleX(0.977);transform-origin:50% 0;">Delete</div>
<div style="left:997px;top:552px;width:70px;height:22px;box-sizing:border-box;border:1px solid #707070;border-radius:3px;background:linear-gradient(#f2f2f2,#ebebeb 45%,#dddddd 50%,#cfcfcf);box-shadow:inset 0 0 0 1px rgba(255,255,255,.6)"></div>
<div class="t" style="left:881px;width:300px;top:557px;color:#1e1e5c;font-size:11px;font-weight:normal;letter-spacing:0px;text-align:center;transform:scaleX(0.977);transform-origin:50% 0;">Rename</div>
<div style="left:1077px;top:552px;width:70px;height:22px;box-sizing:border-box;border:1px solid #707070;border-radius:3px;background:linear-gradient(#f2f2f2,#ebebeb 45%,#dddddd 50%,#cfcfcf);box-shadow:inset 0 0 0 1px rgba(255,255,255,.6)"></div>
<div class="t" style="left:961px;width:300px;top:557px;color:#1e1e5c;font-size:11px;font-weight:normal;letter-spacing:0px;text-align:center;transform:scaleX(0.986);transform-origin:50% 0;">Properties</div>
<div class="t" style="right:704px;top:593px;color:#1e1e5c;font-size:11px;font-weight:normal;letter-spacing:0px;text-align:right;transform:scaleX(0.977);transform-origin:100% 0;">Origin</div>
<div style="left:488px;top:591px;width:166px;height:21px;box-sizing:border-box;border:1px solid #707070;border-radius:3px;background:linear-gradient(#f2f2f2,#ebebeb 45%,#dddddd 50%,#cfcfcf)"></div>
<svg style="position:absolute;left:642px;top:600px" width="7" height="5"><path d="M0 0 L7 0 L3.5 4 Z" fill="#000"/></svg>
<div class="t" style="right:704px;top:617px;color:#1e1e5c;font-size:11px;font-weight:normal;letter-spacing:0px;text-align:right;transform:scaleX(0.982);transform-origin:100% 0;">Quantity</div>
<div style="left:489px;top:615px;width:165px;height:19px;box-sizing:border-box;border:1px solid #e4eaf0;background:#fafcff"></div>
<div style="left:490px;top:616px;width:163px;height:17px;background:#b0c4de"></div>
<div class="t" style="left:492px;top:619px;color:#1e1e5c;font-size:11px;font-weight:normal;letter-spacing:0px;transform:scaleX(1.040);transform-origin:0 0;">0</div>
<div class="t" style="right:457px;top:594px;color:#1e1e5c;font-size:11px;font-weight:normal;letter-spacing:0px;text-align:right;transform:scaleX(0.982);transform-origin:100% 0;">Validity</div>
<div style="left:734px;top:591px;width:81px;height:16px;box-sizing:border-box;border:1px solid #505050;background:#b0c4de"></div>
<div style="left:814px;top:591px;width:80px;height:16px;box-sizing:border-box;border:1px solid #505050;background:#b0c4de"></div>
<div class="t" style="left:624px;width:300px;top:593px;color:#1e1e5c;font-size:11px;font-weight:normal;letter-spacing:0px;text-align:center;transform:scaleX(1.033);transform-origin:50% 0;">13/04/2011</div>
<div class="t" style="left:704px;width:300px;top:593px;color:#1e1e5c;font-size:11px;font-weight:normal;letter-spacing:0px;text-align:center;transform:scaleX(1.033);transform-origin:50% 0;">30/04/2011</div>
<div class="t" style="right:457px;top:618px;color:#1e1e5c;font-size:11px;font-weight:normal;letter-spacing:0px;text-align:right;transform:scaleX(0.980);transform-origin:100% 0;">Contact</div>
<div style="left:735px;top:615px;width:164px;height:19px;box-sizing:border-box;border:1px solid #e4eaf0;background:#fafcff"></div>
<div style="left:736px;top:616px;width:162px;height:17px;background:#b0c4de"></div>
<div class="t" style="left:738px;top:619px;color:#1e1e5c;font-size:11px;font-weight:normal;letter-spacing:0px;transform:scaleX(1.040);transform-origin:0 0;">0</div>
<div style="left:981px;top:591px;width:166px;height:21px;box-sizing:border-box;border:1px solid #707070;border-radius:3px;background:linear-gradient(#f2f2f2,#ebebeb 45%,#dddddd 50%,#cfcfcf)"></div>
<svg style="position:absolute;left:1135px;top:600px" width="7" height="5"><path d="M0 0 L7 0 L3.5 4 Z" fill="#000"/></svg>
<div class="t" style="right:211px;top:618px;color:#1e1e5c;font-size:11px;font-weight:normal;letter-spacing:0px;text-align:right;transform:scaleX(0.973);transform-origin:100% 0;">Price</div>
<div style="left:982px;top:615px;width:164px;height:19px;box-sizing:border-box;border:1px solid #e4eaf0;background:#fafcff"></div>
<div style="left:983px;top:616px;width:162px;height:17px;background:#b0c4de"></div>
<div class="t" style="left:985px;top:619px;color:#1e1e5c;font-size:11px;font-weight:normal;letter-spacing:0px;transform:scaleX(1.023);transform-origin:0 0;">0,00 €</div>
<div style="left:837px;top:800px;width:70px;height:22px;box-sizing:border-box;border:1px solid #707070;border-radius:3px;background:linear-gradient(#f2f2f2,#ebebeb 45%,#dddddd 50%,#cfcfcf);box-shadow:inset 0 0 0 1px rgba(255,255,255,.6)"></div>
<div class="t" style="left:721px;width:300px;top:805px;color:#1e1e5c;font-size:11px;font-weight:normal;letter-spacing:0px;text-align:center;transform:scaleX(0.956);transform-origin:50% 0;">Add</div>
<div style="left:917px;top:800px;width:70px;height:22px;box-sizing:border-box;border:1px solid #707070;border-radius:3px;background:linear-gradient(#f2f2f2,#ebebeb 45%,#dddddd 50%,#cfcfcf);box-shadow:inset 0 0 0 1px rgba(255,255,255,.6)"></div>
<div class="t" style="left:801px;width:300px;top:805px;color:#1e1e5c;font-size:11px;font-weight:normal;letter-spacing:0px;text-align:center;transform:scaleX(0.977);transform-origin:50% 0;">Delete</div>
<div style="left:997px;top:800px;width:70px;height:22px;box-sizing:border-box;border:1px solid #707070;border-radius:3px;background:linear-gradient(#f2f2f2,#ebebeb 45%,#dddddd 50%,#cfcfcf);box-shadow:inset 0 0 0 1px rgba(255,255,255,.6)"></div>
<div class="t" style="left:881px;width:300px;top:805px;color:#1e1e5c;font-size:11px;font-weight:normal;letter-spacing:0px;text-align:center;transform:scaleX(0.977);transform-origin:50% 0;">Rename</div>
<div style="left:1077px;top:800px;width:70px;height:22px;box-sizing:border-box;border:1px solid #707070;border-radius:3px;background:linear-gradient(#f2f2f2,#ebebeb 45%,#dddddd 50%,#cfcfcf);box-shadow:inset 0 0 0 1px rgba(255,255,255,.6)"></div>
<div class="t" style="left:961px;width:300px;top:805px;color:#1e1e5c;font-size:11px;font-weight:normal;letter-spacing:0px;text-align:center;transform:scaleX(0.986);transform-origin:50% 0;">Properties</div>
<svg style="position:absolute;left:1153px;top:834px" width="12" height="12"><path d="M3 11 L11 3 M7 11 L11 7" stroke="#303070" stroke-width="1.5"/></svg>
</body></html>
